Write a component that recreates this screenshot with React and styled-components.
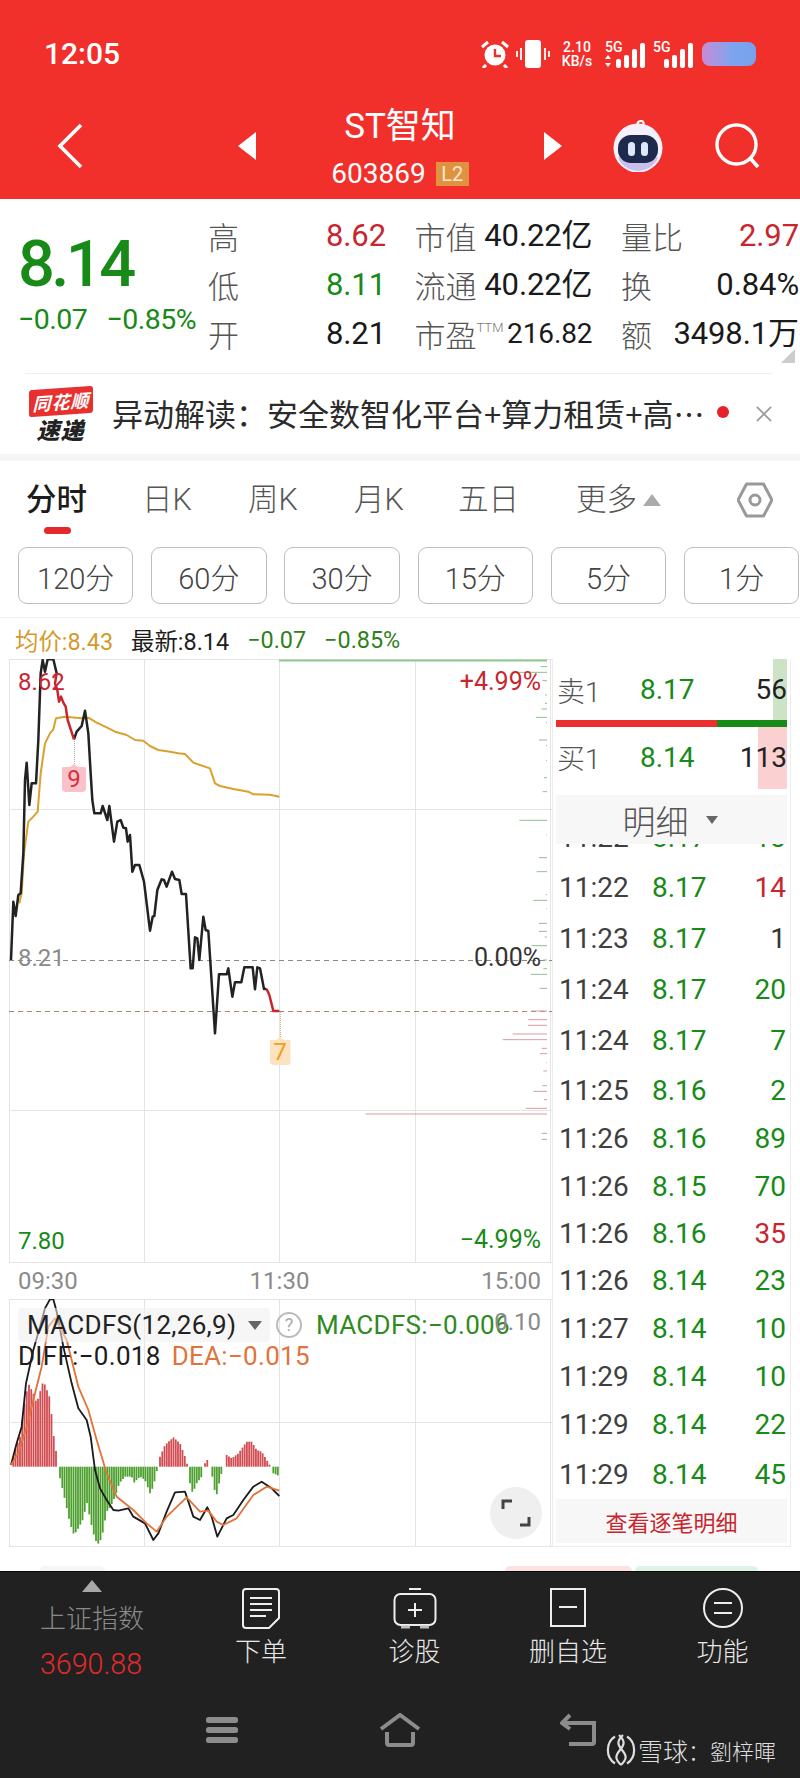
import React from "react";
import styled, { createGlobalStyle } from "styled-components";

const FONT = `Roboto, "Noto Sans CJK SC", sans-serif`;
const CJK = `"Noto Sans CJK SC", Roboto, sans-serif`;
const RED = "#c8262e";
const GREEN = "#178a17";

const Global = createGlobalStyle`
  html, body { margin: 0; padding: 0; background: #fff; }
  body { font-family: ${FONT}; }
  * { box-sizing: border-box; }
`;

const Page = styled.div`
  width: 800px;
  height: 1778px;
  display: flex;
  flex-direction: column;
  overflow: hidden;
  background: #fff;
  color: #222;
  position: relative;
`;

/* ---------- header ---------- */
const Header = styled.header`
  height: 199px;
  background: #f1302c;
  color: #fff;
  padding-top: 40px;
  flex: none;
`;
const StatusBar = styled.div`
  height: 28px;
  display: flex;
  align-items: center;
  justify-content: space-between;
  padding: 0 44px 0 44px;
`;
const Clock = styled.div`
  font-size: 30px;
  font-weight: 500;
  line-height: 28px;
`;
const StatusIcons = styled.div`
  display: flex;
  align-items: center;
`;
const Speed = styled.div`
  width: 34px;
  margin: 0 11px 0 10px;
  font-size: 14px;
  font-weight: 500;
  line-height: 14px;
  text-align: center;
  white-space: nowrap;
`;
const SignalBox = styled.div`
  position: relative;
  width: 42px;
  height: 28px;
  margin-right: ${(p) => p.$mr}px;
`;
const FiveG = styled.span`
  position: absolute;
  left: 0;
  top: 0;
  font-size: 14px;
  line-height: 14px;
  font-weight: 500;
`;
const Battery = styled.div`
  width: 54px;
  height: 24px;
  border-radius: 8px;
  background: linear-gradient(90deg, #c98bd6, #7fa4ef 55%, #76a2ee);
  margin-left: 7px;
`;
const TitleBar = styled.div`
  margin-top: 41px;
  height: 79px;
  display: flex;
  align-items: center;
  padding-left: 57px;
`;
const HeadIcon = styled.svg`
  display: block;
  flex: none;
  margin-top: -6px;
  margin-left: ${(p) => p.$ml || 0}px;
`;
const TitleBlock = styled.div`
  width: 288px;
  display: flex;
  flex-direction: column;
  align-items: center;
  flex: none;
`;
const StockName = styled.div`
  font-size: 35px;
  line-height: 36px;
  font-weight: 400;
  white-space: nowrap;
`;
const CodeRow = styled.div`
  margin-top: 15px;
  height: 28px;
  display: flex;
  align-items: center;
  gap: 10px;
`;
const Code = styled.span`
  font-size: 28px;
  line-height: 28px;
`;
const LevelBadge = styled.span`
  width: 33px;
  height: 24px;
  background: #e09240;
  font-size: 20px;
  line-height: 24px;
  text-align: center;
  color: #fbe9d2;
`;

/* ---------- quote ---------- */
const Quote = styled.section`
  height: 174px;
  flex: none;
  display: flex;
  padding-left: 18px;
  position: relative;
`;
const PriceCol = styled.div`
  width: 190px;
  padding-top: 30px;
  flex: none;
`;
const BigPrice = styled.div`
  color: ${GREEN};
  font-size: 65px;
  font-weight: 500;
  line-height: 70px;
  letter-spacing: -3.6px;
`;
const PriceDelta = styled.div`
  margin-top: 6px;
  display: flex;
  gap: 19px;
  color: ${GREEN};
  font-size: 28.5px;
  line-height: 30px;
  letter-spacing: -0.5px;
  white-space: nowrap;
`;
const StatGrid = styled.div`
  padding-top: 12px;
  display: grid;
  grid-template-columns: 178px 178px 178px;
  column-gap: 28.5px;
  grid-auto-rows: 49px;
  align-items: center;
`;
const Stat = styled.div`
  display: flex;
  justify-content: space-between;
  align-items: center;
  white-space: nowrap;
`;
const StatLabel = styled.span`
  color: #555;
  font-size: 31px;
  line-height: 40px;
  font-family: ${CJK};
  font-weight: 300;
`;
const Sup = styled.sup`
  font-size: 13px;
  line-height: 0;
  vertical-align: 15px;
  color: #777;
  font-family: ${FONT};
`;
const StatValue = styled.span`
  color: ${(p) => p.$c || "#1a1a1a"};
  font-size: ${(p) => (p.$small ? 28 : 31)}px;
  font-weight: 400;
  line-height: 40px;
  letter-spacing: -0.1px;
`;
const CornerMark = styled.div`
  position: absolute;
  right: 5px;
  bottom: 10px;
  width: 0;
  height: 0;
  border-left: 14px solid transparent;
  border-bottom: 14px solid #ccc;
`;

/* ---------- news ---------- */
const News = styled.section`
  height: 81px;
  flex: none;
  margin: 0 28px 0 25px;
  border-top: 1px solid #efefef;
  display: flex;
  align-items: center;
  padding-left: 3px;
  white-space: nowrap;
`;
const NewsLogo = styled.div`
  width: 65px;
  flex: none;
  display: flex;
  flex-direction: column;
  align-items: center;
  margin-top: 3px;
`;
const LogoTag = styled.div`
  width: 64px;
  height: 27px;
  background: #e8302f;
  color: #fff;
  font-size: 18px;
  font-weight: 700;
  font-style: italic;
  line-height: 27px;
  text-align: center;
  border-radius: 3px;
  transform: skewY(-4deg);
  font-family: ${CJK};
  letter-spacing: 1px;
`;
const LogoSub = styled.div`
  color: #222;
  font-size: 23px;
  font-weight: 900;
  font-style: italic;
  line-height: 28px;
  font-family: ${CJK};
  letter-spacing: 1px;
`;
const NewsText = styled.div`
  margin: -2px 0 0 19px;
  width: 600px;
  flex: none;
  font-family: ${CJK};
  font-weight: 400;
  color: #2b2b2b;
  font-size: 31px;
  line-height: 42px;
`;
const NewsDot = styled.span`
  width: 12px;
  height: 12px;
  background: #e8202a;
  border-radius: 50%;
  flex: none;
  margin: -4px 0 0 5px;
`;

const SectionGap = styled.div`
  height: 7px;
  background: #f5f5f5;
  flex: none;
`;

/* ---------- tabs ---------- */
const Tabs = styled.nav`
  height: 86px;
  flex: none;
  display: grid;
  grid-template-columns: 116px 106px 106px 104px 118px 161px 36px;
  padding: 23px 0 0 26px;
  align-items: start;
`;
const Tab = styled.div`
  position: relative;
  font-size: 30.5px;
  line-height: 32px;
  color: ${(p) => (p.$active ? "#1c1c1c" : "#555")};
  font-weight: ${(p) => (p.$active ? 500 : 300)};
  display: flex;
  align-items: center;
  white-space: nowrap;
  font-family: ${FONT};

  &::after {
    content: "";
    display: ${(p) => (p.$active ? "block" : "none")};
    position: absolute;
    left: 18px;
    top: 43px;
    width: 27px;
    height: 7px;
    border-radius: 4px;
    background: #e5282c;
  }
`;
const TabCaret = styled.span`
  margin-left: 6px;
  width: 0;
  height: 0;
  border-left: 9px solid transparent;
  border-right: 9px solid transparent;
  border-bottom: 12px solid #aaa;
`;

const Ranges = styled.div`
  height: 71px;
  flex: none;
  display: flex;
  gap: 17.8px;
  padding-left: 18px;
  border-bottom: 1px solid #f0f0f0;
`;
const RangeBtn = styled.div`
  width: 115.4px;
  height: 57px;
  flex: none;
  border: 1px solid #bdbdbd;
  border-radius: 9px;
  display: flex;
  align-items: center;
  justify-content: center;
  font-size: 29px;
  font-weight: 300;
  color: #444;
`;

const InfoRow = styled.div`
  height: 41px;
  flex: none;
  display: flex;
  align-items: center;
  gap: 18px;
  padding: 3px 0 0 15px;
  font-size: 23.4px;
  white-space: nowrap;
`;
const InfoItem = styled.span`
  color: ${(p) => p.$c};
`;

/* ---------- main ---------- */
const Main = styled.div`
  height: 888px;
  flex: none;
  display: flex;
`;
const ChartCol = styled.div`
  width: 552px;
  flex: none;
  display: flex;
  flex-direction: column;
`;
const PriceChart = styled.div`
  position: relative;
  height: 604px;
  flex: none;
`;
const ChartSvg = styled.svg`
  display: block;
`;
const Overlay = styled.span`
  position: absolute;
  left: ${(p) => (p.$left === undefined ? "auto" : `${p.$left}px`)};
  right: ${(p) => (p.$right === undefined ? "auto" : `${p.$right}px`)};
  top: ${(p) => p.$top}px;
  color: ${(p) => p.$c};
  font-size: ${(p) => p.$fs || 24}px;
  line-height: 28px;
  white-space: nowrap;
`;
const Marker = styled.div`
  position: absolute;
  left: ${(p) => p.$left}px;
  top: ${(p) => p.$top}px;
  width: 24px;
  display: flex;
  flex-direction: column;
  align-items: center;
`;
const Stem = styled.div`
  height: ${(p) => p.$h}px;
  border-left: 1px dotted ${(p) => p.$c};
`;
const MarkerFlag = styled.div`
  width: ${(p) => p.$w}px;
  height: 28px;
  background: ${(p) => p.$bg};
  color: ${(p) => p.$c};
  font-size: 24px;
  line-height: 30px;
  text-align: center;
  border-radius: 4px;
  clip-path: polygon(0 12%, 35% 10%, 50% 0, 65% 10%, 100% 12%, 100% 100%, 0 100%);
`;
const TimeAxis = styled.div`
  height: 36px;
  flex: none;
  display: flex;
  justify-content: space-between;
  align-items: center;
  padding: 0 11px 1px 18px;
  color: #8a8a8a;
  font-size: 24px;
`;
const MacdChart = styled.div`
  position: relative;
  height: 248px;
  flex: none;
`;
const Legend = styled.div`
  position: absolute;
  left: 18px;
  top: 9px;
  display: flex;
  flex-direction: column;
  white-space: nowrap;
`;
const LegendTop = styled.div`
  display: flex;
  align-items: center;
  height: 34px;
`;
const IndicatorSelect = styled.div`
  width: 252px;
  height: 34px;
  border-radius: 4px;
  background: rgba(240, 238, 238, 0.55);
  padding-left: 9px;
  display: flex;
  align-items: center;
  gap: 12px;
  font-size: 26px;
  color: #222;
  letter-spacing: 0.3px;
`;
const SelectCaret = styled.span`
  width: 0;
  height: 0;
  border-left: 7px solid transparent;
  border-right: 7px solid transparent;
  border-top: 9px solid #666;
`;
const HelpDot = styled.span`
  width: 26px;
  height: 26px;
  margin: 0 14px 0 6px;
  border: 2px solid #bbb;
  border-radius: 50%;
  color: #aaa;
  font-size: 18px;
  line-height: 22px;
  text-align: center;
`;
const LegendValue = styled.span`
  color: ${(p) => p.$c};
  font-size: 26px;
  line-height: 30px;
  margin-right: ${(p) => p.$mr || 0}px;
  letter-spacing: 0.3px;
`;
const LegendBottom = styled.div`
  display: flex;
  margin-top: -1px;
  height: 30px;
  align-items: center;
`;
const ExpandBtn = styled.div`
  position: absolute;
  right: 10px;
  bottom: 8px;
  width: 52px;
  height: 52px;
  border-radius: 50%;
  background: #efefef;
  display: flex;
  align-items: center;
  justify-content: center;
`;

/* ---------- right panel ---------- */
const Panel = styled.aside`
  width: 239px;
  flex: none;
  border-left: 1px solid #ececec;
  border-right: 1px solid #ececec;
  border-bottom: 1px solid #ececec;
  padding: 0 3px;
  display: flex;
  flex-direction: column;
`;
const OrderRow = styled.div`
  position: relative;
  height: ${(p) => p.$h}px;
  flex: none;
  display: grid;
  grid-template-columns: 83px 1fr auto;
  align-items: center;
  padding: 0 0 ${(p) => p.$pb || 0}px 1px;
  font-size: 28px;
`;
const OrderBar = styled.div`
  position: absolute;
  right: 0;
  top: 0;
  bottom: 0;
  background: ${(p) => p.$c};
`;
const OrderLabel = styled.span`
  color: #555;
  font-weight: 300;
  position: relative;
`;
const OrderPrice = styled.span`
  color: ${GREEN};
  position: relative;
`;
const OrderVol = styled.span`
  color: #222;
  position: relative;
`;
const SplitBar = styled.div`
  height: 7px;
  flex: none;
  display: flex;
  background: #178a17;
`;
const SplitRed = styled.div`
  height: 100%;
  background: #e9302f;
`;
const DetailHead = styled.div`
  margin-top: 6px;
  height: 49px;
  flex: none;
  background: #f7f7f7;
  display: flex;
  align-items: center;
  justify-content: center;
  gap: 17px;
  padding: 0 3px 0 0;
  color: #555;
  font-size: 33px;
  font-weight: 300;
  position: relative;
  z-index: 1;
`;
const DetailCaret = styled.span`
  width: 0;
  height: 0;
  border-left: 6px solid transparent;
  border-right: 6px solid transparent;
  border-top: 8px solid #666;
`;
const TradeList = styled.div`
  height: 655px;
  flex: none;
  overflow: hidden;
`;
const TradeTrack = styled.div`
  margin-top: -32px;
`;
const Trade = styled.div`
  height: ${(p) => p.$h}px;
  display: grid;
  grid-template-columns: 93px 1fr auto;
  align-items: center;
  padding: 0 1px 0 3px;
  font-size: 28px;
`;
const TradeTime = styled.span`
  color: #3f3f3f;
`;
const TradePrice = styled.span`
  color: ${GREEN};
`;
const TradeVol = styled.span`
  color: ${(p) => p.$c};
`;
const ViewAll = styled.div`
  height: 44px;
  flex: none;
  background: #f7f7f7;
  color: ${RED};
  font-size: 22px;
  display: flex;
  align-items: center;
  justify-content: center;
`;

/* ---------- bottom ---------- */
const PeekRow = styled.div`
  height: 24px;
  flex: none;
  display: flex;
  align-items: flex-end;
  padding-left: 40px;
`;
const Peek = styled.div`
  width: ${(p) => p.$w}px;
  height: 5px;
  margin-left: ${(p) => p.$ml || 0}px;
  border-radius: 40px 40px 0 0;
  background: ${(p) => p.$c};
`;
const Dock = styled.footer`
  flex: 1;
  background: #212121;
  border-top: 1px solid #0a0a0a;
  display: flex;
  flex-direction: column;
`;
const DockGrid = styled.div`
  height: 130px;
  flex: none;
  display: grid;
  grid-template-columns: 184px 154px 153px 154px 155px;
`;
const IndexCell = styled.div`
  display: flex;
  flex-direction: column;
  align-items: flex-start;
  padding: 8px 0 0 40px;
`;
const IndexCaret = styled.span`
  margin-left: 42px;
  width: 0;
  height: 0;
  border-left: 10px solid transparent;
  border-right: 10px solid transparent;
  border-bottom: 12px solid #a8a8a8;
`;
const IndexName = styled.div`
  margin-top: 11px;
  color: #8a8a8a;
  font-size: 26px;
  line-height: 32px;
  font-weight: 300;
`;
const IndexValue = styled.div`
  margin-top: 13px;
  color: #e02b2b;
  font-size: 28.6px;
  line-height: 32px;
  font-weight: 300;
`;
const DockItem = styled.div`
  display: flex;
  flex-direction: column;
  align-items: center;
  padding-top: 14px;
`;
const DockLabel = styled.div`
  margin-top: 7px;
  color: #e8e8e8;
  font-size: 26px;
  line-height: 30px;
  font-weight: 300;
`;
const SystemBar = styled.div`
  flex: 1;
  display: flex;
  align-items: flex-start;
  padding: 11px 0 0 206px;
`;
const SysIcon = styled.svg`
  display: block;
  flex: none;
  margin-left: ${(p) => p.$ml || 0}px;
`;
const Watermark = styled.div`
  position: absolute;
  left: 606px;
  top: 1733px;
  display: flex;
  align-items: center;
  color: #dedede;
  white-space: nowrap;
  height: 34px;
`;
const WmBrand = styled.span`
  margin-left: 2px;
  font-size: 25px;
  font-weight: 300;
`;
const WmName = styled.span`
  font-size: 22px;
  font-weight: 300;
`;

/* ---------- data ---------- */
const quoteStats = [
  [["高"], "8.62", RED],
  [["市值"], "40.22亿"],
  [["量比"], "2.97", RED],
  [["低"], "8.11", GREEN],
  [["流通"], "40.22亿"],
  [["换"], "0.84%"],
  [["开"], "8.21"],
  [["市盈", "TTM"], "216.82", undefined, true],
  [["额"], "3498.1万"],
];
const tabs = ["分时", "日K", "周K", "月K", "五日"];
const ranges = ["120分", "60分", "30分", "15分", "5分", "1分"];
const trades = [
  ["11:22", "8.17", "13", GREEN, 50],
  ["11:22", "8.17", "14", RED, 51],
  ["11:23", "8.17", "1", "#333", 50],
  ["11:24", "8.17", "20", GREEN, 52],
  ["11:24", "8.17", "7", GREEN, 50],
  ["11:25", "8.16", "2", GREEN, 50],
  ["11:26", "8.16", "89", GREEN, 47.5],
  ["11:26", "8.15", "70", GREEN, 47.5],
  ["11:26", "8.16", "35", RED, 47],
  ["11:26", "8.14", "23", GREEN, 47.5],
  ["11:27", "8.14", "10", GREEN, 48],
  ["11:29", "8.14", "10", GREEN, 47.5],
  ["11:29", "8.14", "22", GREEN, 49],
  ["11:29", "8.14", "45", GREEN, 51],
];

const pts = (a) => a.map((p) => p.join(",")).join(" ");
const blackA = [[33,960],[40,785],[47,828],[55,765],[62,760],[70,640],[75,420],[80,368],[88,495],[95,430],[108,430],[115,300],[122,100],[128,60],[135,95],[143,58],[160,58],[170,100]];
const redA = [[170,100],[165,130],[172,150],[177,185],[183,170],[190,188],[197,200],[203,240],[222,298]];
const blackB = [[222,298],[230,275],[245,258],[255,212],[265,280],[272,400],[277,480],[283,520],[302,520],[308,498],[322,540],[328,498],[342,605],[352,545],[362,540],[370,563],[378,565],[383,605],[390,585],[397,695],[405,675],[418,675],[432,725],[440,790],[450,872],[458,830],[463,828],[472,750],[485,718],[492,720],[500,740],[516,695],[525,717],[538,720],[545,762],[558,762],[572,985],[578,985],[585,892],[592,895],[598,960],[610,830],[617,870],[625,873],[645,1180],[657,1003],[680,1003],[685,985],[697,1070],[705,1027],[724,1027],[733,982],[758,982],[765,1048],[772,982],[780,985],[792,1047],[800,1047]];
const redB = [[800,1047],[808,1065],[820,1113],[838,1113]];
const avg = [[58,790],[65,760],[72,640],[85,545],[100,530],[113,515],[122,400],[135,310],[150,280],[160,268],[168,235],[195,230],[245,235],[265,233],[290,248],[320,262],[345,275],[380,285],[405,300],[430,302],[450,318],[475,330],[510,335],[535,340],[555,342],[580,368],[600,375],[630,385],[645,430],[660,438],[700,447],[745,455],[760,463],[810,464],[838,470]];
const greenTicks = [[80,782],[97,700],[122,787],[165,795],[190,795],[207,785],[232,768],[248,798],[300,777],[317,798],[361,798],[413,792],[455,788],[541,718],[585,799],[653,777],[695,770],[764,797],[781,760],[806,799],[850,777],[874,777],[891,794],[917,755],[960,790],[986,790],[1003,752],[1045,779]];
const redTicks = [[1113,755],[1139,745],[1156,744],[1182,698],[1199,668],[1225,785],[1241,780],[1268,799],[1293,790],[1337,787],[1354,760],[1379,792],[1405,737],[1422,257],[1480,785],[1498,785]];

const histAnchors = [
  [[33,0],[45,50],[60,90],[75,200],[85,250],[100,220],[110,190],[130,258],[150,205],[160,100],[172,20]],
  [[180,-35],[195,-100],[210,-170],[222,-205],[235,-185],[248,-160],[262,-105],[268,-145],[280,-200],[292,-235],[305,-215],[320,-135],[332,-120],[345,-90],[358,-50],[375,-30],[395,-30],[402,-48],[420,-30],[435,-40],[450,-80],[460,-60],[472,-5]],
  [[480,30],[495,65],[520,88],[540,70],[555,30],[562,5]],
  [[570,-50],[578,-80],[590,-50],[605,-30]],
  [[615,10],[625,25]],
  [[637,-30],[648,-95],[655,-60],[668,-5]],
  [[680,35],[695,25],[715,40],[740,75],[755,75],[770,50],[785,45],[800,20],[810,3]],
  [[820,-20],[838,-28]],
];
const histBars = histAnchors.flatMap((seg) => {
  const out = [];
  for (let x = seg[0][0]; x <= seg[seg.length - 1][0] + 0.01; x += 6.75) {
    let i = 0;
    while (i < seg.length - 2 && seg[i + 1][0] < x) i++;
    const [x0, y0] = seg[i];
    const [x1, y1] = seg[Math.min(i + 1, seg.length - 1)];
    const t = x1 === x0 ? 0 : (x - x0) / (x1 - x0);
    out.push([x, y0 + (y1 - y0) * t]);
  }
  return out;
});
const diffLine = [[33,675],[50,610],[65,560],[78,430],[100,330],[120,260],[135,205],[150,178],[160,178],[170,215],[190,320],[215,430],[235,505],[260,540],[272,590],[285,690],[300,745],[320,780],[340,810],[355,812],[385,805],[400,830],[435,850],[460,900],[475,880],[500,815],[525,757],[555,755],[580,830],[600,840],[622,802],[635,830],[652,890],[680,835],[700,825],[730,780],[760,740],[785,725],[815,745],[838,768]];
const deaLine = [[33,675],[55,640],[80,560],[100,480],[125,380],[145,260],[165,235],[200,300],[235,440],[265,510],[290,600],[320,700],[350,770],[400,810],[440,850],[470,875],[500,830],[560,772],[600,815],[625,812],[650,845],[670,855],[710,835],[760,765],[800,740],[838,752]];

const GRID = "#e4e4e4";

function PriceSvg() {
  return (
    <ChartSvg width="552" height="604" viewBox="0 659 552 604">
      <g stroke={GRID} strokeWidth="1" fill="none">
        <path d="M9.5 659V1263M144.5 659V1263M279.5 659V1263M415.5 659V1263M550.5 659V1263" />
        <path d="M9 659.5H552M9 809.5H552M9 1110.5H552M9 1262.5H552" />
      </g>
      <path d="M279 660.5H547" stroke="#8fc98f" strokeWidth="2" />
      <path d="M9 960.5H552" stroke="#8a8a8a" strokeWidth="1" strokeDasharray="5 4" />
      <path d="M9 1011.5H552" stroke="#a08a70" strokeWidth="1" strokeDasharray="5 4" />
      <g transform="translate(280 640) scale(0.33333)" strokeWidth="3">
        {greenTicks.map(([y, x]) => (
          <path key={y} d={`M${x} ${y}H801`} stroke="#8fbf8f" />
        ))}
        {redTicks.map(([y, x]) => (
          <path key={y} d={`M${x} ${y}H801`} stroke="#d99aa0" />
        ))}
      </g>
      <g transform="translate(0 640) scale(0.33333)" fill="none" strokeLinejoin="round" strokeWidth="7.5">
        <polyline points={pts(avg)} stroke="#d9a12e" strokeWidth="6" />
        <polyline points={pts(blackA)} stroke="#222" />
        <polyline points={pts(blackB)} stroke="#222" />
        <polyline points={pts(redA)} stroke="#c8262e" />
        <polyline points={pts(redB)} stroke="#c8262e" />
      </g>
    </ChartSvg>
  );
}

function MacdSvg() {
  return (
    <ChartSvg width="552" height="248" viewBox="0 1299 552 248">
      <g stroke={GRID} strokeWidth="1" fill="none">
        <path d="M9.5 1299V1547M144.5 1299V1547M279.5 1299V1547M415.5 1299V1547M550.5 1299V1547" />
        <path d="M9 1299.5H552M9 1422.5H552M9 1546.5H552" />
      </g>
      <g transform="translate(0 1240) scale(0.33333)" fill="none" strokeLinejoin="round">
        <g strokeWidth="5.4">
          {histBars.map(([x, h]) => (
            <path
              key={x}
              d={`M${x.toFixed(1)} 680V${(680 - h).toFixed(1)}`}
              stroke={h > 0 ? "#d14b50" : "#4da02e"}
            />
          ))}
        </g>
        <polyline points={pts(diffLine)} stroke="#1c1c1c" strokeWidth="5.5" />
        <polyline points={pts(deaLine)} stroke="#e2733a" strokeWidth="5.5" />
      </g>
    </ChartSvg>
  );
}

function SignalBars({ arrows }) {
  return (
    <svg width="42" height="28" viewBox="0 0 42 28" style={{ display: "block" }}>
      {arrows && <path d="M3 15l3 4H0zM3 27l3-4H0z" fill="#fff" />}
      <g fill="#fff">
        <rect x="11" y="19" width="5" height="9" rx="2" />
        <rect x="19" y="15" width="5" height="13" rx="2" />
        <rect x="27" y="9" width="5" height="19" rx="2" />
        <rect x="35" y="3" width="5" height="25" rx="2" />
      </g>
    </svg>
  );
}

export default function App() {
  return (
    <Page>
      <Global />
      <Header>
        <StatusBar>
          <Clock>12:05</Clock>
          <StatusIcons>
            <svg width="30" height="28" viewBox="0 0 30 28" fill="none" style={{ display: "block" }}>
              <circle cx="15" cy="15" r="10.5" fill="#fff" />
              <path d="M15 9v7h6" stroke="#f1302c" strokeWidth="2.4" />
              <path d="M2 7l6-5M28 7l-6-5M6 25l-3 3M24 25l3 3" stroke="#fff" strokeWidth="3" />
            </svg>
            <svg width="34" height="28" viewBox="0 0 34 28" fill="none" style={{ display: "block", marginLeft: 6 }}>
              <rect x="9" y="0" width="16" height="28" rx="3" fill="#fff" />
              <path d="M5 8v12M1 11v6M29 8v12M33 11v6" stroke="#fff" strokeWidth="1.8" />
            </svg>
            <Speed>
              2.10
              <br />
              KB/s
            </Speed>
            <SignalBox $mr={6}>
              <FiveG>5G</FiveG>
              <SignalBars arrows />
            </SignalBox>
            <SignalBox $mr={0}>
              <FiveG>5G</FiveG>
              <SignalBars />
            </SignalBox>
            <Battery />
          </StatusIcons>
        </StatusBar>
        <TitleBar>
          <HeadIcon width="26" height="46" viewBox="0 0 26 46" fill="none">
            <path d="M24 2L3 23l21 21" stroke="#fff" strokeWidth="3.6" />
          </HeadIcon>
          <HeadIcon $ml={155} width="18" height="28" viewBox="0 0 18 28">
            <path d="M18 0v28L0 14z" fill="#fff" />
          </HeadIcon>
          <TitleBlock>
            <StockName>ST智知</StockName>
            <CodeRow>
              <Code>603869</Code>
              <LevelBadge>L2</LevelBadge>
            </CodeRow>
          </TitleBlock>
          <HeadIcon width="18" height="28" viewBox="0 0 18 28">
            <path d="M0 0v28l18-14z" fill="#fff" />
          </HeadIcon>
          <HeadIcon $ml={50} width="52" height="52" viewBox="0 0 52 52" fill="none">
            <path d="M26 6c-1-3 0-5 3-5s3 3 2 4" stroke="#fff" strokeWidth="2.2" />
            <circle cx="26" cy="28" r="24.5" fill="#f4f0fc" />
            <path d="M6 37c3 11 16 14 20 14s17-3 20-14z" fill="#c9c0ec" />
            <rect x="6" y="15" width="40" height="28" rx="13" fill="#1d2a4d" />
            <rect x="16" y="22" width="7" height="14" rx="3.5" fill="#dfe8f8" />
            <rect x="29" y="22" width="7" height="14" rx="3.5" fill="#dfe8f8" />
          </HeadIcon>
          <HeadIcon $ml={51} width="46" height="46" viewBox="0 0 46 46" fill="none">
            <circle cx="21.5" cy="21.5" r="19.5" stroke="#fff" strokeWidth="3.4" />
            <path d="M35 35l8 9" stroke="#fff" strokeWidth="3.6" />
          </HeadIcon>
        </TitleBar>
      </Header>

      <Quote>
        <PriceCol>
          <BigPrice>8.14</BigPrice>
          <PriceDelta>
            <span>−0.07</span>
            <span>−0.85%</span>
          </PriceDelta>
        </PriceCol>
        <StatGrid>
          {quoteStats.map(([label, value, color, small]) => (
            <Stat key={label[0]}>
              <StatLabel>
                {label[0]}
                {label[1] && <Sup>{label[1]}</Sup>}
              </StatLabel>
              <StatValue $c={color} $small={small}>{value}</StatValue>
            </Stat>
          ))}
        </StatGrid>
        <CornerMark />
      </Quote>

      <News>
        <NewsLogo>
          <LogoTag>同花顺</LogoTag>
          <LogoSub>速递</LogoSub>
        </NewsLogo>
        <NewsText>异动解读：安全数智化平台+算力租赁+高…</NewsText>
        <NewsDot />
        <svg width="18" height="18" viewBox="0 0 18 18" fill="none" style={{ display: "block", marginLeft: 27 }}>
          <path d="M1 1l16 16M17 1L1 17" stroke="#999" strokeWidth="1.8" />
        </svg>
      </News>
      <SectionGap />

      <Tabs>
        {tabs.map((t, i) => (
          <Tab key={t} $active={i === 0}>
            {t}
          </Tab>
        ))}
        <Tab>
          更多
          <TabCaret />
        </Tab>
        <svg width="36" height="36" viewBox="0 0 36 36" fill="none" style={{ display: "block", marginTop: -2 }}>
          <path d="M9.5 2h17L35 18l-8.5 16h-17L1 18z" stroke="#999" strokeWidth="3" strokeLinejoin="round" />
          <circle cx="18" cy="18" r="5" stroke="#999" strokeWidth="3" />
        </svg>
      </Tabs>

      <Ranges>
        {ranges.map((r) => (
          <RangeBtn key={r}>{r}</RangeBtn>
        ))}
      </Ranges>

      <InfoRow>
        <InfoItem $c="#d49a2b">均价:8.43</InfoItem>
        <InfoItem $c="#1c1c1c">最新:8.14</InfoItem>
        <InfoItem $c="#2f7f1d">−0.07</InfoItem>
        <InfoItem $c="#2f7f1d">−0.85%</InfoItem>
      </InfoRow>

      <Main>
        <ChartCol>
          <PriceChart>
            <PriceSvg />
            <Overlay $left={18} $top={9} $c={RED}>8.62</Overlay>
            <Overlay $left={18} $top={285} $c="#8a8a8a">8.21</Overlay>
            <Overlay $left={18} $top={568} $c={GREEN}>7.80</Overlay>
            <Overlay $right={11} $top={9} $c={RED} $fs={25}>+4.99%</Overlay>
            <Overlay $right={11} $top={285} $c="#333" $fs={25}>0.00%</Overlay>
            <Overlay $right={11} $top={567} $c={GREEN} $fs={25}>−4.99%</Overlay>
            <Marker $left={62} $top={82}>
              <Stem $h={23} $c="#aaa" />
              <MarkerFlag $w={24} $bg="#f9c2c8" $c="#d6303a">9</MarkerFlag>
            </Marker>
            <Marker $left={268} $top={353}>
              <Stem $h={25} $c="#e0b070" />
              <MarkerFlag $w={21} $bg="#fde2bf" $c="#ef9f1e">7</MarkerFlag>
            </Marker>
          </PriceChart>
          <TimeAxis>
            <span>09:30</span>
            <span>11:30</span>
            <span>15:00</span>
          </TimeAxis>
          <MacdChart>
            <MacdSvg />
            <Legend>
              <LegendTop>
                <IndicatorSelect>
                  MACDFS(12,26,9)
                  <SelectCaret />
                </IndicatorSelect>
                <HelpDot>?</HelpDot>
                <LegendValue $c="#2f8a22">MACDFS:−0.006</LegendValue>
              </LegendTop>
              <LegendBottom>
                <LegendValue $c="#1c1c1c" $mr={11}>DIFF:−0.018</LegendValue>
                <LegendValue $c="#e2733a">DEA:−0.015</LegendValue>
              </LegendBottom>
            </Legend>
            <Overlay $right={11} $top={9} $c="#8a8a8a">0.10</Overlay>
            <ExpandBtn>
              <svg width="30" height="30" viewBox="0 0 30 30" fill="none">
                <path d="M2 11V3h9M28 19v8h-9" stroke="#444" strokeWidth="3" />
              </svg>
            </ExpandBtn>
          </MacdChart>
        </ChartCol>

        <Panel>
          <OrderRow $h={61}>
            <OrderBar $c="#cde3c6" style={{ width: 14 }} />
            <OrderLabel>卖1</OrderLabel>
            <OrderPrice>8.17</OrderPrice>
            <OrderVol>56</OrderVol>
          </OrderRow>
          <SplitBar>
            <SplitRed style={{ width: 161 }} />
          </SplitBar>
          <OrderRow $h={62} $pb={2}>
            <OrderBar $c="#fbd0d0" style={{ width: 29 }} />
            <OrderLabel>买1</OrderLabel>
            <OrderPrice>8.14</OrderPrice>
            <OrderVol>113</OrderVol>
          </OrderRow>
          <DetailHead>
            明细
            <DetailCaret />
          </DetailHead>
          <TradeList>
            <TradeTrack>
              {trades.map(([time, price, vol, color, h], i) => (
                <Trade key={i} $h={h}>
                  <TradeTime>{time}</TradeTime>
                  <TradePrice>{price}</TradePrice>
                  <TradeVol $c={color}>{vol}</TradeVol>
                </Trade>
              ))}
            </TradeTrack>
          </TradeList>
          <ViewAll>查看逐笔明细</ViewAll>
        </Panel>
      </Main>

      <PeekRow>
        <Peek $w={65} $c="#f6f6f6" />
        <Peek $w={127} $ml={400} $c="#fbe3e3" />
        <Peek $w={123} $ml={3} $c="#dcf5e6" />
      </PeekRow>

      <Dock>
        <DockGrid>
          <IndexCell>
            <IndexCaret />
            <IndexName>上证指数</IndexName>
            <IndexValue>3690.88</IndexValue>
          </IndexCell>
          <DockItem>
            <svg width="44" height="44" viewBox="0 0 44 44" fill="none" stroke="#eee" strokeWidth="2">
              <path d="M7 3h30a3 3 0 0 1 3 3v26l-10 10H7a3 3 0 0 1-3-3V6a3 3 0 0 1 3-3z" />
              <path d="M11 12h22M11 18h22M11 24h22M11 30h16" />
            </svg>
            <DockLabel>下单</DockLabel>
          </DockItem>
          <DockItem>
            <svg width="44" height="44" viewBox="0 0 44 44" fill="none" stroke="#eee" strokeWidth="2">
              <path d="M16 3h12" />
              <rect x="1.5" y="8" width="41" height="31" rx="6" />
              <path d="M22 17v14M15 24h14" />
              <path d="M8 41h9M27 41h9" strokeWidth="3" stroke="#bbb" />
            </svg>
            <DockLabel>诊股</DockLabel>
          </DockItem>
          <DockItem>
            <svg width="44" height="44" viewBox="0 0 44 44" fill="none" stroke="#eee" strokeWidth="2">
              <rect x="5" y="3" width="34" height="37" />
              <path d="M13 21h18" />
            </svg>
            <DockLabel>删自选</DockLabel>
          </DockItem>
          <DockItem>
            <svg width="44" height="44" viewBox="0 0 44 44" fill="none" stroke="#eee" strokeWidth="2">
              <circle cx="22" cy="22" r="19" />
              <path d="M13 17h18M13 27h18" />
            </svg>
            <DockLabel>功能</DockLabel>
          </DockItem>
        </DockGrid>
        <SystemBar>
          <SysIcon width="32" height="30" viewBox="0 0 32 30" fill="#8c8c8c">
            <rect y="4" width="32" height="6" rx="2.5" />
            <rect y="14" width="32" height="6" rx="2.5" />
            <rect y="24" width="32" height="6" rx="2.5" />
          </SysIcon>
          <SysIcon $ml={141} width="42" height="34" viewBox="0 0 42 34" fill="none" stroke="#8c8c8c" strokeWidth="4">
            <path d="M2 16L21 2l19 14" />
            <path d="M8 19v11a2 2 0 0 0 2 2h22a2 2 0 0 0 2-2V19" />
          </SysIcon>
          <SysIcon $ml={139} width="38" height="34" viewBox="0 0 38 34" fill="none" stroke="#8c8c8c" strokeWidth="4">
            <path d="M10 2L2 10l8 6" />
            <path d="M3 10h31v19a2 2 0 0 1-2 2H9" />
          </SysIcon>
        </SystemBar>
      </Dock>

      <Watermark>
        <svg width="30" height="34" viewBox="0 0 30 34" fill="none" stroke="#dedede" strokeWidth="2.2">
          <path d="M9 3.5A14 15.5 0 0 0 9 30.5M21 3.5A14 15.5 0 0 1 21 30.5" />
          <path d="M13 2c6 6 6 9 1 15s-5 9 1 15" />
          <path d="M17 2c-6 6 -6 9 -1 15s5 9 -1 15" />
        </svg>
        <WmBrand>雪球</WmBrand>
        <WmName>：劉梓暉</WmName>
      </Watermark>
    </Page>
  );
}
